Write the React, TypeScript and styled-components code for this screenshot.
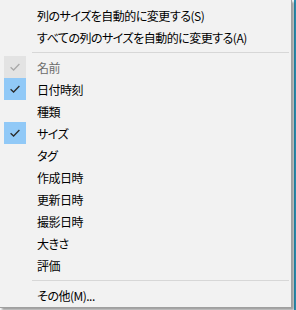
import styled, { createGlobalStyle } from 'styled-components';

const GlobalStyle = createGlobalStyle`
    html, body {
        margin: 0;
        padding: 0;
    }
    body {
        width: 296px;
        height: 310px;
        overflow: hidden;
        background: linear-gradient(to right, #f5f5f5 294px, #2a8cae 294px);
        font-family: "Noto Sans CJK JP", "Noto Sans", sans-serif;
    }
`

interface IColumn {
    label: string
    checked?: boolean
    disabled?: boolean
}

const columns: IColumn[] = [
    { label: '名前', checked: true, disabled: true },
    { label: '日付時刻', checked: true },
    { label: '種類' },
    { label: 'サイズ', checked: true },
    { label: 'タグ' },
    { label: '作成日時' },
    { label: '更新日時' },
    { label: '撮影日時' },
    { label: '大きさ' },
    { label: '評価' },
]

const Check = ({ color }: { color: string }) => (
    <svg width="10" height="8" viewBox="0 0 10 8">
        <polyline points="0.6,4.2 3.6,7 9.4,1" fill="none" stroke={color} strokeWidth="1.3" />
    </svg>
)

const App = () => {
    return (
        <>
            <GlobalStyle />
            <Menu>
                <Item>
                    <Gutter />
                    <Label>列のサイズを自動的に変更する(S)</Label>
                </Item>
                <Item>
                    <Gutter />
                    <Label>すべての列のサイズを自動的に変更する(A)</Label>
                </Item>
                <Separator />
                {columns.map(col => (
                    <Item key={col.label}>
                        <Gutter>
                            {col.checked && (
                                <CheckBox $disabled={col.disabled}>
                                    <Check color={col.disabled ? '#a9a9a9' : '#2b2b2b'} />
                                </CheckBox>
                            )}
                        </Gutter>
                        <Label $disabled={col.disabled}>{col.label}</Label>
                    </Item>
                ))}
                <Separator />
                <Item>
                    <Gutter />
                    <Label>その他(M)...</Label>
                </Item>
            </Menu>
        </>
    )
}

const Menu = styled.div`
    width: 291px;
    padding: 4px 0 1px;
    background: #f2f2f2;
    border-right: 1px solid #a0a0a0;
    border-bottom: 1px solid #a0a0a0;
    box-shadow: 2px 2px 2px rgba(0, 0, 0, 0.35);
`
const Item = styled.div`
    display: flex;
    align-items: center;
    height: 22px;
`
const Gutter = styled.div`
    width: 37px;
    height: 22px;
    display: flex;
    align-items: center;
    padding-left: 4px;
    box-sizing: border-box;
`
const CheckBox = styled.div<{ $disabled?: boolean }>`
    width: 22px;
    height: 22px;
    display: flex;
    align-items: center;
    justify-content: center;
    background: ${p => (p.$disabled ? '#e3e3e3' : '#91c9f7')};
`
const Label = styled.span<{ $disabled?: boolean }>`
    font-size: 12px;
    line-height: 22px;
    padding-top: 1px;
    white-space: nowrap;
    letter-spacing: -0.5px;
    font-feature-settings: "palt";
    color: ${p => (p.$disabled ? '#6d6d6d' : '#000')};
`
const Separator = styled.div`
    height: 8px;
    margin-left: 32px;
    margin-right: 2px;
    display: flex;
    align-items: center;
    &::after {
        content: '';
        flex: 1;
        height: 1px;
        background: #d7d7d7;
    }
`

export default App
